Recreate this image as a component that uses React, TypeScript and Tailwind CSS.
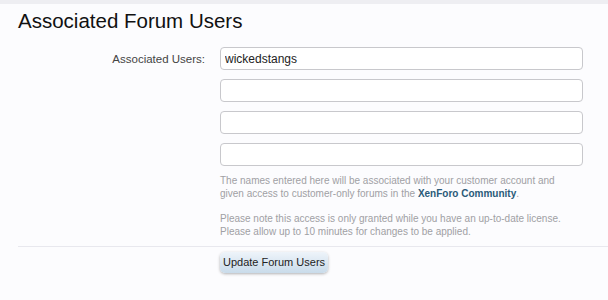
export default function App() {
  const extraRows = [1, 2, 3]

  return (
    <div className="min-h-[300px] w-[608px] bg-[#fcfcfe] font-['Liberation_Sans',Arial,sans-serif] border-t-[4px] border-[#eeeef2]">
      <h1 className="pl-[18px] pt-[2px] text-[20.5px] leading-[30px] text-[#111]">Associated Forum Users</h1>

      <div className="mt-[11px] flex">
        <div className="w-[220px] shrink-0 pr-[15px] pt-[4px] text-right text-[11.5px] text-[#444]">Associated Users:</div>
        <div className="flex-1 pr-[25px]">
          <div className="flex flex-col gap-[9px]">
            <input
              defaultValue="wickedstangs"
              className="h-[23px] w-full rounded-[4px] border border-[#c8c8cc] bg-white px-[4px] text-[12px] text-[#222] outline-none"
            />
            {extraRows.map((r) => (
              <input
                key={r}
                className="h-[23px] w-full rounded-[4px] border border-[#c8c8cc] bg-white px-[4px] text-[12px] text-[#222] outline-none"
              />
            ))}
          </div>

          <p className="mt-[9px] text-[10px] leading-[12.5px] text-[#a0a0a4]">
            The names entered here will be associated with your customer account and
            <br />
            given access to customer-only forums in the{" "}
            <a className="font-bold text-[#2a5a78]">XenForo Community</a>.
          </p>
          <p className="mt-[12px] text-[10px] leading-[13px] text-[#a0a0a4]">
            Please note this access is only granted while you have an up-to-date license.
            <br />
            Please allow up to 10 minutes for changes to be applied.
          </p>
        </div>
      </div>

      <div className="ml-[18px] mt-[8px] border-t border-[#e8e8ee]" />

      <div className="flex pl-[220px] pt-[5px]">
        <button className="block h-[21px] w-[108px] rounded-[5px] bg-gradient-to-b from-[#eef4fa] to-[#c9dbea] text-[11px] text-[#222] shadow-[0_1px_3px_rgba(0,0,0,0.3)]">
          Update Forum Users
        </button>
      </div>
    </div>
  )
}
